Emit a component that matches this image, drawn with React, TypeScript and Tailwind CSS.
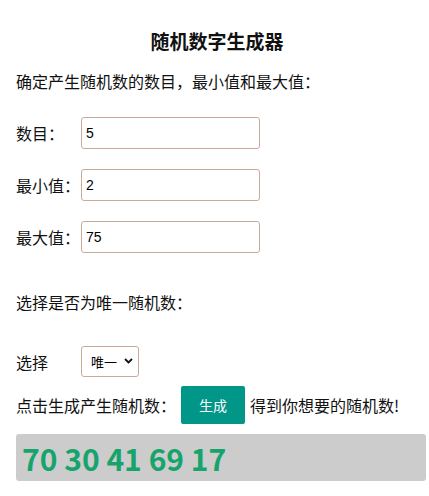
import React, { useState } from "react";

export default function App() {
  const [count, setCount] = useState("5");
  const [min, setMin] = useState("2");
  const [max, setMax] = useState("75");
  const [unique, setUnique] = useState("unique");
  const [nums, setNums] = useState<number[]>([70, 30, 41, 69, 17]);

  const generate = () => {
    const n = parseInt(count) || 0;
    const lo = parseInt(min) || 0;
    const hi = parseInt(max) || 0;
    const out: number[] = [];
    let guard = 0;
    while (out.length < n && guard < 10000) {
      guard++;
      const v = Math.floor(Math.random() * (hi - lo + 1)) + lo;
      if (unique === "unique" && out.includes(v)) continue;
      out.push(v);
    }
    setNums(out);
  };

  const font = { fontFamily: '"Noto Sans CJK SC", "Noto Sans", sans-serif' };
  const inputCls =
    "w-[179px] h-[32px] border border-[#c9aa9b] rounded-[3px] px-[4px] text-[14px] text-black outline-none bg-white";

  return (
    <div className="w-[429px] min-h-[496px] bg-white text-[#111] text-[16px]" style={font}>
      <div className="pt-[29px] pl-[5px] text-center text-[19px] font-bold leading-[24px] h-[53px]">
        随机数字生成器
      </div>
      <div className="mt-[16px] px-4 leading-[24px] h-[24px]">确定产生随机数的数目，最小值和最大值：</div>

      <div className="mt-[24px] px-4 flex flex-col gap-[20px]">
        <div className="flex items-center h-[32px]">
          <span className="w-[65px] shrink-0">数目：</span>
          <input
            className={inputCls}
            style={{ fontFamily: '"Liberation Sans", Arial, sans-serif' }}
            value={count}
            onChange={(e) => setCount(e.target.value)}
          />
        </div>
        <div className="flex items-center h-[32px]">
          <span className="w-[65px] shrink-0">最小值：</span>
          <input
            className={inputCls}
            style={{ fontFamily: '"Liberation Sans", Arial, sans-serif' }}
            value={min}
            onChange={(e) => setMin(e.target.value)}
          />
        </div>
        <div className="flex items-center h-[32px]">
          <span className="w-[65px] shrink-0">最大值：</span>
          <input
            className={inputCls}
            style={{ fontFamily: '"Liberation Sans", Arial, sans-serif' }}
            value={max}
            onChange={(e) => setMax(e.target.value)}
          />
        </div>
      </div>

      <div className="mt-[37px] px-4 leading-[24px] h-[24px]">选择是否为唯一随机数：</div>

      <div className="mt-[32px] px-4 flex items-center h-[31px]">
        <span className="w-[65px] shrink-0">选择</span>
        <div className="relative w-[58px] h-[31px]">
          <select
            className="appearance-none w-[58px] h-[31px] border border-[#c9aa9b] rounded-[3px] pl-[9px] pr-[18px] text-[13px] text-black bg-white outline-none"
            value={unique}
            onChange={(e) => setUnique(e.target.value)}
          >
            <option value="unique">唯一</option>
            <option value="repeat">重复</option>
          </select>
          <svg
            className="pointer-events-none absolute right-[6px] top-[12px]"
            width="9"
            height="6"
            viewBox="0 0 9 6"
          >
            <path d="M1 1 L4.5 4.5 L8 1" fill="none" stroke="#111" strokeWidth="1.8" />
          </svg>
        </div>
      </div>

      <div className="mt-[9px] px-4 flex items-center h-[38px]">
        <span>点击生成产生随机数：</span>
        <button
          onClick={generate}
          className="ml-[5px] w-[64px] h-[38px] bg-[#009688] text-white text-[14px] rounded-[2px]"
        >
          生成
        </button>
        <span className="ml-[5px]">得到你想要的随机数!</span>
      </div>

      <div className="mt-[10px] ml-4 w-[410px] h-[47px] bg-[#cccccc] rounded-[3px] flex items-center pl-[6px]">
        <span className="text-[30px] font-bold text-[#16a46c] leading-none">{nums.join(" ")}</span>
      </div>
    </div>
  );
}
